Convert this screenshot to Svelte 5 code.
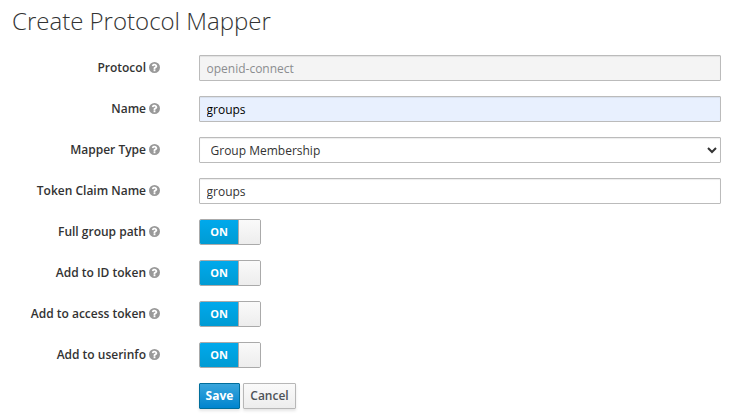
<script>
  let name = $state('groups');
  let claim = $state('groups');
  let switches = $state([
    { label: 'Full group path', on: true },
    { label: 'Add to ID token', on: true },
    { label: 'Add to access token', on: true },
    { label: 'Add to userinfo', on: true }
  ]);
</script>

{#snippet caption(text)}
  <div class="caption">
    <span>{text}</span>
    <svg class="help" viewBox="0 0 1536 1536" aria-hidden="true">
      <path fill="#999" fill-rule="evenodd" d="M768 0a768 768 0 1 0 0 1536A768 768 0 0 0 768 0zM896 1248q0 32-32 32H672q-32 0-32-32v-192q0-32 32-32h192q32 0 32 32zM1152 576c0 150-99 211-176 255-51 29-80 56-80 97q0 32-32 32H672q-32 0-32-32v-36c0-97 96-180 167-212 62-28 88-55 88-107 0-46-60-87-127-87-37 0-71 12-89 24-20 14-40 34-89 95-8 10-29 14-41 5L418 510c-14-10-17-28-8-42 86-143 208-212 371-212 171 0 371 137 371 320z" />
    </svg>
  </div>
{/snippet}

<main>
  <h1>Create Protocol Mapper</h1>
  <form onsubmit={(e) => e.preventDefault()}>
    <div class="row">
      {@render caption('Protocol')}
      <input class="control" value="openid-connect" disabled aria-label="Protocol" />
    </div>
    <div class="row">
      {@render caption('Name')}
      <input class="control filled" bind:value={name} aria-label="Name" />
    </div>
    <div class="row">
      {@render caption('Mapper Type')}
      <select class="control" aria-label="Mapper Type"><option>Group Membership</option></select>
    </div>
    <div class="row">
      {@render caption('Token Claim Name')}
      <input class="control" bind:value={claim} aria-label="Token Claim Name" />
    </div>
    {#each switches as item}
      <div class="row">
        {@render caption(item.label)}
        <button type="button" class="switch" class:off={!item.on} aria-label={item.label} onclick={() => (item.on = !item.on)}>
          <span class="state">{item.on ? 'ON' : 'OFF'}</span>
          <span class="handle"></span>
        </button>
      </div>
    {/each}
    <div class="row actions">
      <button class="btn primary">Save</button>
      <button type="button" class="btn">Cancel</button>
    </div>
  </form>
</main>

<style>
  :global(body) {
    background: #fff;
    overflow: hidden;
  }
  main {
    box-sizing: border-box;
    height: 419px;
    padding: 8px 11px 0 12px;
    color: #333;
    font: 12px/26px "Open Sans", sans-serif;
  }
  h1 {
    margin: 0;
    height: 26px;
    font-size: 24px;
    font-weight: 300;
    line-height: 26px;
  }
  form {
    display: flex;
    flex-direction: column;
    gap: 15px;
    padding-top: 21px;
  }
  .row {
    display: flex;
    height: 26px;
  }
  .caption {
    display: flex;
    justify-content: flex-end;
    align-items: center;
    gap: 3px;
    width: 148px;
    margin-right: 39px;
    font-weight: 600;
    white-space: nowrap;
  }
  .help {
    width: 11px;
    height: 11px;
    margin-bottom: 1px;
  }
  .control {
    box-sizing: border-box;
    flex: 1;
    min-width: 0;
    height: 26px;
    margin: 0;
    padding: 2px 6.5px;
    border: 1px solid #bbb;
    border-radius: 1px;
    background: #fff;
    box-shadow: inset 0 1px 1px rgba(0, 0, 0, 0.075);
    color: #333;
    font: 12px/20px "Open Sans", sans-serif;
    outline: none;
  }
  .control:disabled {
    background: #f4f4f4;
    color: #8b8d8f;
  }
  .filled {
    background: #e8f0fe;
    color: #000;
  }
  .switch {
    box-sizing: border-box;
    display: flex;
    width: 62px;
    height: 26px;
    padding: 0;
    overflow: hidden;
    border: 1px solid #aaa;
    border-radius: 2px;
    background: none;
  }
  .state {
    width: 38px;
    height: 24px;
    background: linear-gradient(#00a9ec, #009bd3);
    color: #fff;
    font: 700 11px/24px "Open Sans", sans-serif;
    text-align: center;
  }
  .handle {
    box-sizing: border-box;
    width: 22px;
    height: 24px;
    border-left: 1px solid #aaa;
    background: linear-gradient(#fafafa, #ededed);
  }
  .off {
    flex-direction: row-reverse;
  }
  .actions {
    gap: 3px;
    padding-left: 187px;
  }
  .btn {
    box-sizing: border-box;
    width: 53px;
    height: 26px;
    padding: 0;
    border: 1px solid #b7b7b7;
    border-radius: 1px;
    background: linear-gradient(#fafafa, #ededed);
    box-shadow: 0 2px 3px rgba(0, 0, 0, 0.1);
    color: #4d5258;
    font: 600 12px/22px "Open Sans", sans-serif;
    text-align: center;
  }
  .primary {
    width: 41px;
    border-color: #006e9c;
    background: linear-gradient(#39a5dc, #0085cf);
    color: #fff;
    font-weight: 700;
  }
</style>
